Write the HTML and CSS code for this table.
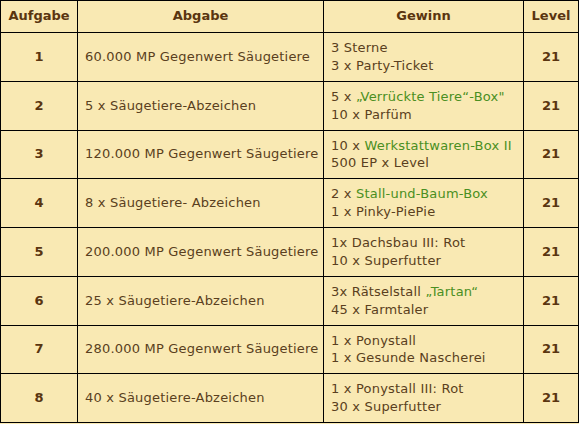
FILE: index.html
```html
<!DOCTYPE html>
<html lang="de">
<head>
<meta charset="utf-8">
<link rel="stylesheet" href="styles.css">
</head>
<body>
<table class="tasks">
  <colgroup>
    <col class="c-task">
    <col class="c-give">
    <col class="c-win">
    <col class="c-level">
  </colgroup>
  <thead>
    <tr><th>Aufgabe</th><th>Abgabe</th><th>Gewinn</th><th>Level</th></tr>
  </thead>
  <tbody>
    <tr><td class="num">1</td><td>60.000 MP Gegenwert Säugetiere</td><td>3 Sterne<br>3 x Party-Ticket</td><td class="num">21</td></tr>
    <tr><td class="num">2</td><td>5 x Säugetiere-Abzeichen</td><td>5 x <span class="link">„Verrückte Tiere“-Box"</span><br>10 x Parfüm</td><td class="num">21</td></tr>
    <tr><td class="num">3</td><td>120.000 MP Gegenwert Säugetiere</td><td>10 x <span class="link">Werkstattwaren-Box II</span><br>500 EP x Level</td><td class="num">21</td></tr>
    <tr><td class="num">4</td><td>8 x Säugetiere- Abzeichen</td><td>2 x <span class="link">Stall-und-Baum-Box</span><br>1 x Pinky-PiePie</td><td class="num">21</td></tr>
    <tr><td class="num">5</td><td>200.000 MP Gegenwert Säugetiere</td><td>1x Dachsbau III: Rot<br>10 x Superfutter</td><td class="num">21</td></tr>
    <tr><td class="num">6</td><td>25 x Säugetiere-Abzeichen</td><td>3x Rätselstall <span class="link">„Tartan“</span><br>45 x Farmtaler</td><td class="num">21</td></tr>
    <tr><td class="num">7</td><td>280.000 MP Gegenwert Säugetiere</td><td>1 x Ponystall<br>1 x Gesunde Nascherei</td><td class="num">21</td></tr>
    <tr><td class="num">8</td><td>40 x Säugetiere-Abzeichen</td><td>1 x Ponystall III: Rot<br>30 x Superfutter</td><td class="num">21</td></tr>
  </tbody>
</table>
</body>
</html>
```

FILE: styles.css
```css
html, body {
  margin: 0;
  padding: 0;
  background: #f9e9b3;
}

.tasks {
  border-collapse: collapse;
  table-layout: fixed;
  width: 578px;
  background: #f9e9b3;
  font-family: "DejaVu Sans", Verdana, sans-serif;
  font-size: 13px;
  line-height: 17.875px;
  color: #5a3f20;
}

.c-task { width: 77px; }
.c-give { width: 246px; }
.c-win { width: 200px; }
.c-level { width: 55px; }

.tasks th,
.tasks td {
  border: 1px solid #000;
  padding: 6px 7px;
  text-align: left;
  vertical-align: middle;
  white-space: nowrap;
}

.tasks td {
  letter-spacing: 0.2px;
}

.tasks th {
  text-align: center;
  font-weight: bold;
  color: #5a3510;
  line-height: 18px;
  padding: 6px 4px 7px;
}

.tasks td.num {
  text-align: center;
  font-weight: bold;
  color: #5a3510;
  letter-spacing: 0;
}

.link {
  color: #4a8f22;
}
```
